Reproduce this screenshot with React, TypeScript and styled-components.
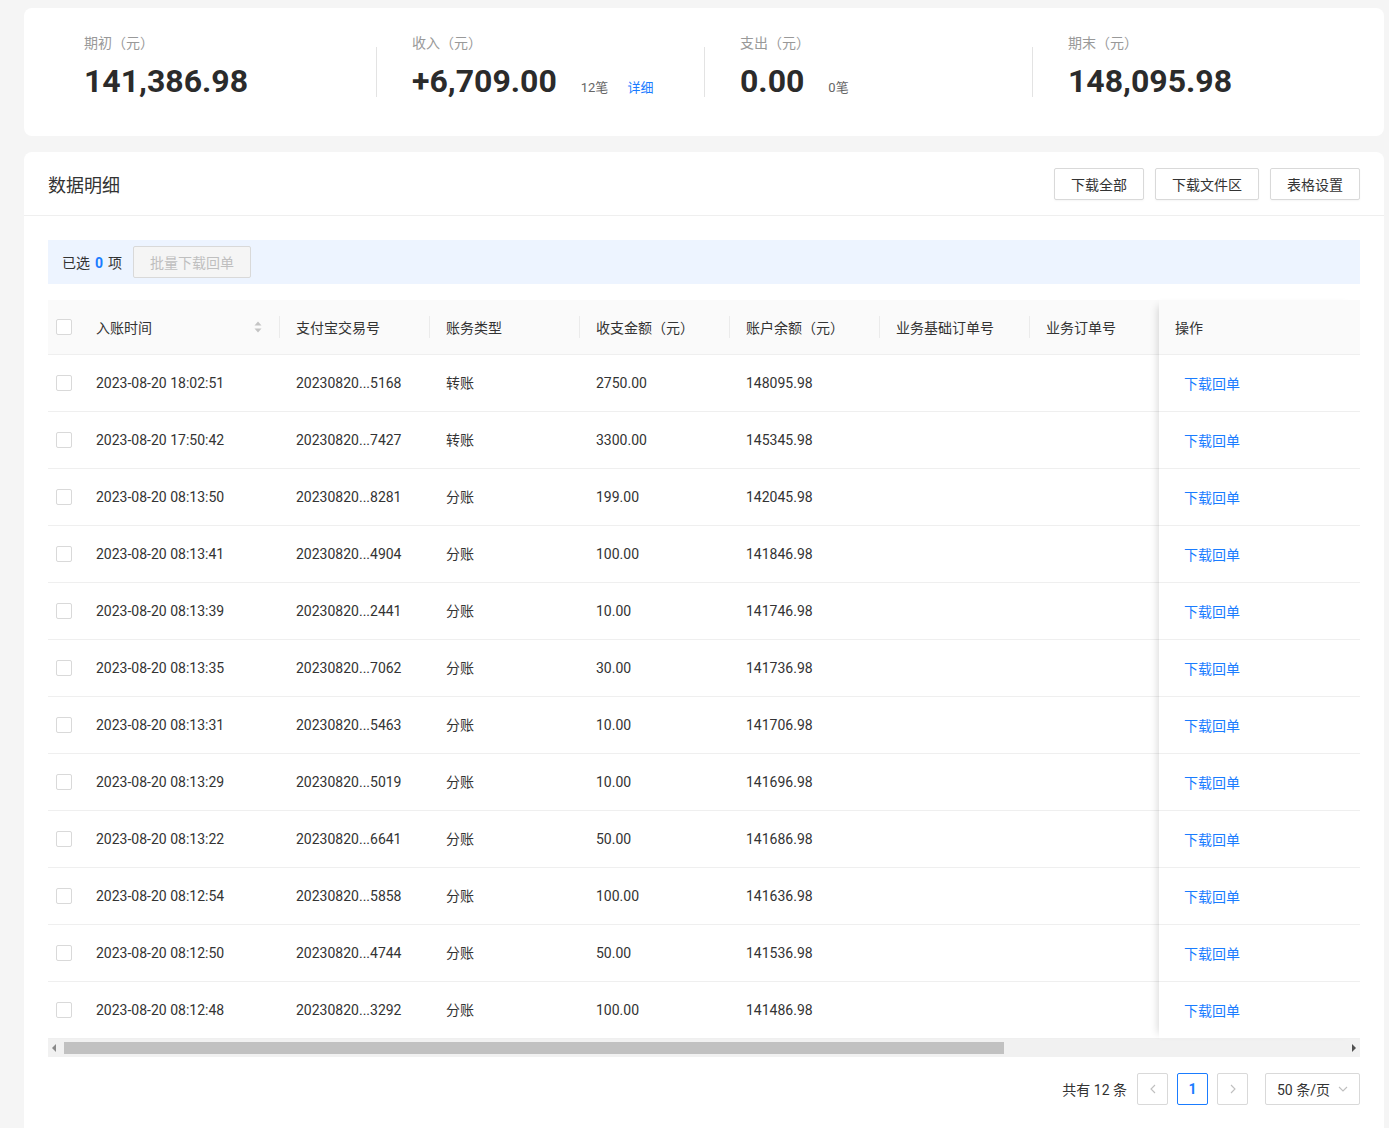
import React from "react";
import styled, { createGlobalStyle } from "styled-components";

const GlobalStyle = createGlobalStyle`
  html, body {
    margin: 0;
    padding: 0;
    background: #f5f5f5;
    font-family: Roboto, "Noto Sans CJK SC", sans-serif;
    color: #333;
  }
  * { box-sizing: border-box; }
`;

const Page = styled.div`
  display: flex;
  flex-direction: column;
  gap: 16px;
  padding: 8px 5px 0 24px;
  min-height: 1128px;
`;

const SummaryCard = styled.section`
  background: #fff;
  border-radius: 8px;
  height: 128px;
  padding: 24px 24px 0;
  display: grid;
  grid-template-columns: repeat(4, 1fr);
`;

const StatCell = styled.div`
  display: flex;
  align-items: flex-start;
`;

const StatDivider = styled.div<{ $hidden?: boolean }>`
  width: 1px;
  height: 50px;
  margin-top: 15px;
  flex: none;
  background: ${({ $hidden }) => ($hidden ? "transparent" : "#e3e3e3")};
`;

const StatBody = styled.div`
  padding-left: 35px;
  display: flex;
  flex-direction: column;
`;

const StatLabel = styled.div`
  font-size: 14px;
  line-height: 22px;
  color: #999;
`;

const StatRow = styled.div`
  display: flex;
  align-items: baseline;
  margin-top: 7px;
`;

const StatValue = styled.div`
  font-size: 32px;
  line-height: 40px;
  font-weight: 700;
  color: #2b2b2b;
`;

const StatCount = styled.span`
  font-size: 13px;
  color: #666;
  margin-left: 24px;
`;

const DetailLink = styled.a`
  font-size: 13px;
  color: #1a7cff;
  margin-left: 19px;
  cursor: pointer;
`;

const DetailCard = styled.section`
  background: #fff;
  border-radius: 8px 8px 0 0;
  flex: 1;
`;

const CardHeader = styled.header`
  height: 64px;
  padding: 0 24px;
  display: flex;
  align-items: center;
  justify-content: space-between;
  border-bottom: 1px solid #efefef;
`;

const CardTitle = styled.h2`
  margin: 0;
  font-size: 18px;
  font-weight: 400;
  color: #333;
`;

const HeaderActions = styled.div`
  display: flex;
  gap: 11px;
`;

const Button = styled.button<{ $disabled?: boolean }>`
  height: 32px;
  padding: 0 16px;
  border: 1px solid #d9d9d9;
  border-radius: 2px;
  font-family: inherit;
  font-size: 14px;
  background: ${({ $disabled }) => ($disabled ? "#f5f5f5" : "#fff")};
  color: ${({ $disabled }) => ($disabled ? "#bfbfbf" : "#333")};
  cursor: ${({ $disabled }) => ($disabled ? "not-allowed" : "pointer")};
  box-shadow: ${({ $disabled }) => ($disabled ? "none" : "0 1px 2px rgba(0,0,0,0.04)")};
`;

const CardBody = styled.div`
  padding: 24px 24px 0;
`;

const SelectionBar = styled.div`
  height: 44px;
  padding: 0 14px;
  display: flex;
  align-items: center;
  gap: 11px;
  background: #edf4ff;
  font-size: 14px;
`;

const SelectedText = styled.span`
  color: #333;
  b {
    color: #1a7cff;
    font-weight: 700;
    margin: 0 5px;
  }
`;

const TableFrame = styled.div`
  margin-top: 16px;
  display: flex;
`;

const MainPane = styled.div`
  flex: 1;
  min-width: 0;
  overflow: hidden;
`;

const MainGrid = styled.div`
  width: 1589px;
`;

const columns = "32px 200px 150px 150px 150px 150px 150px 150px 257px";

const HeadRow = styled.div`
  display: grid;
  grid-template-columns: ${columns};
  height: 55px;
  background: #fafafa;
  border-bottom: 1px solid #efefef;
`;

const BodyRow = styled.div`
  display: grid;
  grid-template-columns: ${columns};
  height: 57px;
  border-bottom: 1px solid #efefef;
`;

const CheckCell = styled.div`
  display: flex;
  align-items: center;
  padding-left: 8px;
`;

const Checkbox = styled.span`
  width: 16px;
  height: 16px;
  border: 1px solid #d9d9d9;
  border-radius: 2px;
  background: #fff;
`;

const HeadCell = styled.div`
  display: flex;
  align-items: center;
  padding-left: 16px;
  font-size: 14px;
  color: #333;
  white-space: nowrap;
`;

const HeadLabel = styled.span`
  flex: 1;
`;

const HeadSep = styled.span`
  width: 1px;
  height: 22px;
  background: #ebebeb;
  flex: none;
`;

const SortIcon = styled.svg`
  margin-right: 17px;
  flex: none;
`;

const Cell = styled.div<{ $cjk?: boolean }>`
  display: flex;
  align-items: center;
  padding-left: 16px;
  font-size: 14px;
  line-height: 20px;
  color: #333;
  white-space: nowrap;
  ${({ $cjk }) => ($cjk ? `font-family: "Noto Sans CJK SC", sans-serif; padding-bottom: 2px;` : "")}
`;

const FixedPane = styled.div`
  width: 201px;
  flex: none;
  background: #fff;
  position: relative;
  z-index: 1;
  box-shadow: -7px 0 8px -6px rgba(0, 0, 0, 0.16);
`;

const FixedHead = styled.div`
  height: 55px;
  display: flex;
  align-items: center;
  padding-left: 16px;
  background: #fafafa;
  border-bottom: 1px solid #efefef;
  font-size: 14px;
`;

const FixedCell = styled.div`
  height: 57px;
  display: flex;
  align-items: center;
  padding-left: 25px;
  border-bottom: 1px solid #efefef;
`;

const ActionLink = styled.a`
  font-size: 14px;
  color: #1a7cff;
  cursor: pointer;
`;

const ScrollBar = styled.div`
  height: 18px;
  display: flex;
  align-items: center;
  background: #f1f1f1;
`;

const ScrollArrow = styled.div<{ $dir: "left" | "right" }>`
  width: 12px;
  height: 18px;
  flex: none;
  display: flex;
  align-items: center;
  justify-content: center;
  &::before {
    content: "";
    border-top: 4px solid transparent;
    border-bottom: 4px solid transparent;
    ${({ $dir }) =>
      $dir === "left" ? "border-right: 4px solid #8a8a8a;" : "border-left: 4px solid #505050;"}
  }
`;

const ScrollTrack = styled.div`
  flex: 1;
  height: 12px;
  padding: 0 4px;
`;

const ScrollThumb = styled.div`
  height: 12px;
  background: #c1c1c1;
`;

const Pagination = styled.div`
  display: flex;
  justify-content: flex-end;
  align-items: center;
  gap: 9px;
  margin-top: 16px;
  padding-bottom: 24px;
  font-size: 14px;
`;

const Total = styled.span`
  margin-right: 1px;
  color: #333;
`;

const PageButton = styled.button<{ $active?: boolean }>`
  width: 31px;
  height: 32px;
  padding: 0;
  display: flex;
  align-items: center;
  justify-content: center;
  background: #fff;
  border: 1px solid ${({ $active }) => ($active ? "#1a7cff" : "#d9d9d9")};
  border-radius: 2px;
  color: ${({ $active }) => ($active ? "#1a7cff" : "#bfbfbf")};
  font-family: inherit;
  font-size: 14px;
  font-weight: ${({ $active }) => ($active ? 700 : 400)};
`;

const PageSize = styled.div`
  margin-left: 8px;
  width: 95px;
  height: 32px;
  border: 1px solid #d9d9d9;
  border-radius: 2px;
  display: flex;
  align-items: center;
  justify-content: space-between;
  padding: 0 11px 0 11px;
  color: #333;
`;

const stats = [
  { label: "期初（元）", value: "141,386.98" },
  { label: "收入（元）", value: "+6,709.00", count: "12笔", detail: true },
  { label: "支出（元）", value: "0.00", count: "0笔" },
  { label: "期末（元）", value: "148,095.98" },
];

const headers = ["支付宝交易号", "账务类型", "收支金额（元）", "账户余额（元）", "业务基础订单号", "业务订单号"];

const rows = [
  ["2023-08-20 18:02:51", "20230820...5168", "转账", "2750.00", "148095.98"],
  ["2023-08-20 17:50:42", "20230820...7427", "转账", "3300.00", "145345.98"],
  ["2023-08-20 08:13:50", "20230820...8281", "分账", "199.00", "142045.98"],
  ["2023-08-20 08:13:41", "20230820...4904", "分账", "100.00", "141846.98"],
  ["2023-08-20 08:13:39", "20230820...2441", "分账", "10.00", "141746.98"],
  ["2023-08-20 08:13:35", "20230820...7062", "分账", "30.00", "141736.98"],
  ["2023-08-20 08:13:31", "20230820...5463", "分账", "10.00", "141706.98"],
  ["2023-08-20 08:13:29", "20230820...5019", "分账", "10.00", "141696.98"],
  ["2023-08-20 08:13:22", "20230820...6641", "分账", "50.00", "141686.98"],
  ["2023-08-20 08:12:54", "20230820...5858", "分账", "100.00", "141636.98"],
  ["2023-08-20 08:12:50", "20230820...4744", "分账", "50.00", "141536.98"],
  ["2023-08-20 08:12:48", "20230820...3292", "分账", "100.00", "141486.98"],
];

const Chevron = ({ dir }: { dir: "left" | "right" | "down" }) => {
  const d = dir === "left" ? "M7 1 3 5l4 4" : dir === "right" ? "M3 1l4 4-4 4" : "M1 3l4 4 4-4";
  return (
    <svg width="10" height="10" viewBox="0 0 10 10" fill="none">
      <path d={d} stroke="#bfbfbf" strokeWidth="1.1" />
    </svg>
  );
};

export default function App() {
  return (
    <>
      <GlobalStyle />
      <Page>
        <SummaryCard>
          {stats.map((s, i) => (
            <StatCell key={s.label}>
              <StatDivider $hidden={i === 0} />
              <StatBody>
                <StatLabel>{s.label}</StatLabel>
                <StatRow>
                  <StatValue>{s.value}</StatValue>
                  {s.count && <StatCount>{s.count}</StatCount>}
                  {s.detail && <DetailLink>详细</DetailLink>}
                </StatRow>
              </StatBody>
            </StatCell>
          ))}
        </SummaryCard>

        <DetailCard>
          <CardHeader>
            <CardTitle>数据明细</CardTitle>
            <HeaderActions>
              <Button>下载全部</Button>
              <Button>下载文件区</Button>
              <Button>表格设置</Button>
            </HeaderActions>
          </CardHeader>

          <CardBody>
            <SelectionBar>
              <SelectedText>
                已选<b>0</b>项
              </SelectedText>
              <Button $disabled>批量下载回单</Button>
            </SelectionBar>

            <TableFrame>
              <MainPane>
                <MainGrid>
                  <HeadRow>
                    <CheckCell>
                      <Checkbox />
                    </CheckCell>
                    <HeadCell>
                      <HeadLabel>入账时间</HeadLabel>
                      <SortIcon width="8" height="12" viewBox="0 0 8 12">
                        <path d="M4 0.5 7.5 4.5h-7z" fill="#c4c4c4" />
                        <path d="M4 11.5 0.5 7.5h7z" fill="#c4c4c4" />
                      </SortIcon>
                      <HeadSep />
                    </HeadCell>
                    {headers.map((h) => (
                      <HeadCell key={h}>
                        <HeadLabel>{h}</HeadLabel>
                        <HeadSep />
                      </HeadCell>
                    ))}
                    <HeadCell />
                  </HeadRow>
                  {rows.map((r) => (
                    <BodyRow key={r[0]}>
                      <CheckCell>
                        <Checkbox />
                      </CheckCell>
                      {r.map((v, j) => (
                        <Cell key={j} $cjk={j === 2}>
                          {v}
                        </Cell>
                      ))}
                      <Cell />
                      <Cell />
                      <Cell />
                    </BodyRow>
                  ))}
                </MainGrid>
              </MainPane>
              <FixedPane>
                <FixedHead>操作</FixedHead>
                {rows.map((r) => (
                  <FixedCell key={r[0]}>
                    <ActionLink>下载回单</ActionLink>
                  </FixedCell>
                ))}
              </FixedPane>
            </TableFrame>

            <ScrollBar>
              <ScrollArrow $dir="left" />
              <ScrollTrack>
                <ScrollThumb style={{ width: "73.4%" }} />
              </ScrollTrack>
              <ScrollArrow $dir="right" />
            </ScrollBar>

            <Pagination>
              <Total>共有 12 条</Total>
              <PageButton>
                <Chevron dir="left" />
              </PageButton>
              <PageButton $active>1</PageButton>
              <PageButton>
                <Chevron dir="right" />
              </PageButton>
              <PageSize>
                <span>50 条/页</span>
                <Chevron dir="down" />
              </PageSize>
            </Pagination>
          </CardBody>
        </DetailCard>
      </Page>
    </>
  );
}
